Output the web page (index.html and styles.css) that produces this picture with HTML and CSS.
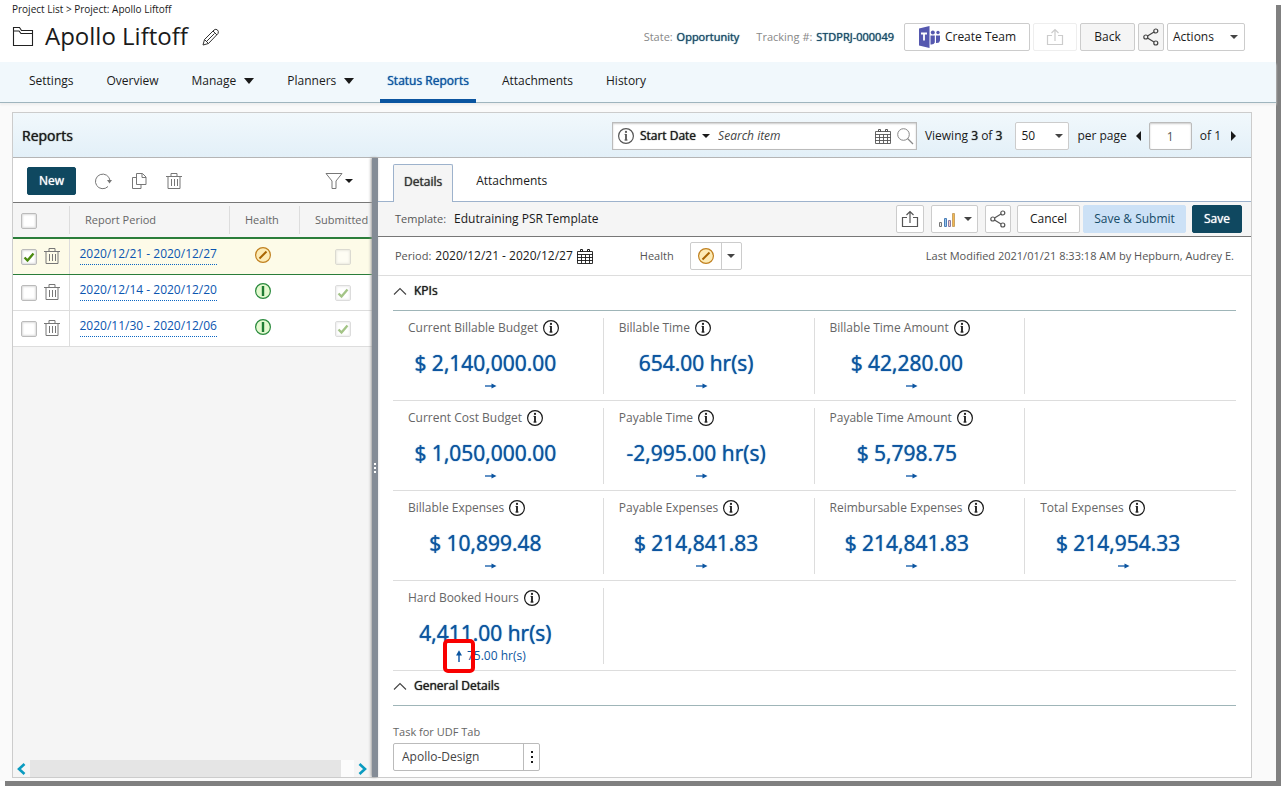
FILE: index.html
```html
<!DOCTYPE html>
<html lang="en">
<head>
<meta charset="utf-8">
<title>Apollo Liftoff - Status Reports</title>
<link rel="stylesheet" href="styles.css">
</head>
<body>
<svg class="sprite" aria-hidden="true">
  <symbol id="i-trash" viewBox="0 0 16 18"><path d="M0 4.500h16M5 4.500v-3h6v3M2 4.500v12h12v-12M5.500 7v7M8.500 7v7M11.500 7v7" fill="none" stroke="currentColor"/></symbol>
  <symbol id="i-info" viewBox="0 0 18 18"><circle cx="9" cy="9" r="7.400" fill="none" stroke="currentColor" stroke-width="1.200"/><path d="M9 7v6.500" stroke="currentColor" stroke-width="1.800"/><path d="M7.500 7.400H9M7.300 13h3.400" stroke="currentColor" stroke-width=".8"/><circle cx="9" cy="4.900" r="1.100" fill="currentColor"/></symbol>
  <symbol id="i-share" viewBox="0 0 16 18"><g fill="none" stroke="currentColor" stroke-width="1.200"><circle cx="2.800" cy="9" r="2"/><circle cx="12.800" cy="3" r="2"/><circle cx="12.800" cy="15" r="2"/><path d="M4.500 8l6.500-4M4.500 10l6.500 4"/></g></symbol>
  <symbol id="i-export" viewBox="0 0 18 18"><path d="M6 7.500H1.500v9h15v-9H12M9 13V2M5.500 5L9 1.500 12.500 5" fill="none" stroke="currentColor" stroke-width="1.200"/></symbol>
  <symbol id="i-cal" viewBox="0 0 18 17"><g fill="none" stroke="currentColor"><path d="M1.500 3.500h15v12h-15zM1 6.500h16M1 9.500h16M1 12.500h16M5.500 6.500v9M9.500 6.500v9M13.500 6.500v9" stroke-width=".9"/><path d="M4.500 1.500h2v2h-2zM11.500 1.500h2v2h-2z"/></g></symbol>
  <symbol id="i-amber" viewBox="0 0 18 18"><circle cx="9" cy="9" r="7.400" fill="#fdebb5" stroke="#c08020" stroke-width="1.200"/><path d="M5.500 12.500l7-7" stroke="#a86400" stroke-width="2"/></symbol>
  <symbol id="i-green" viewBox="0 0 18 18"><circle cx="9" cy="9" r="7.400" fill="#e3f9cf" stroke="#2a8a3e" stroke-width="1.200"/><path d="M9 4v10" stroke="#1f7d34" stroke-width="2.400"/></symbol>
  <symbol id="i-arrow" viewBox="0 0 12 6"><path d="M0 3h9" stroke="#3a76b8" stroke-width="1.600"/><path d="M6.500 .4L11.500 3l-5 2.600z" fill="#0b55a0"/></symbol>
  <symbol id="i-up" viewBox="0 0 6 12"><path d="M3 12V3" stroke="#3a76b8" stroke-width="1.800"/><path d="M0 5.500L3 .3l3 5.200z" fill="#0b55a0"/></symbol>
  <symbol id="i-chev" viewBox="0 0 14 8"><path d="M1 7.500l6-6 6 6" fill="none" stroke="#444" stroke-width="1.100"/></symbol>
</svg>
<div class="page">
  <header class="top">
    <div class="ident">
      <div class="crumbs"><a href="#">Project List</a> &gt; <span>Project: Apollo Liftoff</span></div>
      <div class="title-row">
        <svg class="folder" viewBox="0 0 22 21"><path d="M1.500 19.500V1.500h6l2 3h11v15zM1.500 5h5.500l2 2.500h11.500" fill="none" stroke="#222" stroke-width="1.100"/></svg>
        <h1>Apollo Liftoff</h1>
        <button class="bare" aria-label="Edit name"><svg class="pencil" viewBox="0 0 18 18"><path d="M1 17l1.500-5.500L12 2q2-1.500 3.500 0t.500 3.500L6.500 15.500zM2.500 11.500l4 4M11 3l4 4M5 13l7.500-7.500" fill="none" stroke="#333"/></svg></button>
      </div>
    </div>
    <div class="actions">
      <span class="meta">State: <b>Opportunity</b></span>
      <span class="meta">Tracking #: <b>STDPRJ-000049</b></span>
      <div class="btns">
        <button class="btn team"><svg class="teams" viewBox="0 0 24 24"><path d="M1 3.500L11.500 1v22L1 20.500z" fill="#5558af"/><path d="M3 8.500h6M6 8.500v7" stroke="#fff" stroke-width="1.800"/><circle cx="14.800" cy="7.500" r="2" fill="#5558af"/><circle cx="20" cy="7.500" r="1.700" fill="#5558af"/><path d="M12.500 10.500h4.300v7q-1 2.500-4.300 2zM18 10.500h4v5q-.5 3-4 2.500z" fill="#5558af"/></svg>Create Team</button>
        <button class="btn off" disabled aria-label="Export"><svg class="ic18"><use href="#i-export"/></svg></button>
        <button class="btn grey back">Back</button>
        <button class="btn grey share" aria-label="Share"><svg class="ic-share"><use href="#i-share"/></svg></button>
        <button class="btn menu">Actions <i class="caret soft"></i></button>
      </div>
    </div>
  </header>
  <nav class="nav">
    <a href="#">Settings</a>
    <a href="#">Overview</a>
    <a href="#">Manage <i class="caret big"></i></a>
    <a href="#">Planners <i class="caret big"></i></a>
    <a href="#" class="on" aria-current="page">Status Reports</a>
    <a href="#">Attachments</a>
    <a href="#">History</a>
  </nav>
  <main class="panel">
    <div class="panel-head">
      <h2>Reports</h2>
      <div class="finder">
        <div class="search">
          <svg class="ic18 dim"><use href="#i-info"/></svg>
          <button class="bare strong">Start Date <i class="caret"></i></button>
          <input type="text" placeholder="Search item" aria-label="Search item">
          <button class="bare" aria-label="Pick a date"><svg class="ic-cal dim"><use href="#i-cal"/></svg></button>
          <button class="bare" aria-label="Search"><svg class="glass" viewBox="0 0 18 18"><circle cx="7.500" cy="7.500" r="5.800" fill="none" stroke="#888"/><path d="M11.500 11.500l5.500 5.500" stroke="#888" stroke-width="1.300"/></svg></button>
        </div>
        <span class="viewing">Viewing <b>3</b> of <b>3</b></span>
        <span class="select"><select aria-label="Rows per page" id="rows"><option>50</option></select><i class="caret soft"></i></span>
        <label for="rows" class="perpage">per page</label>
        <button class="bare tri left" aria-label="Previous page"></button>
        <input class="pageno" type="text" value="1" aria-label="Page">
        <span>of 1</span>
        <button class="bare tri right" aria-label="Next page"></button>
      </div>
    </div>
    <div class="split">
      <section class="list">
        <div class="tools">
          <button class="btn solid new">New</button>
          <button class="bare" aria-label="Refresh"><svg class="ic-tool" viewBox="0 0 18 18"><path d="M14 14.500A7.300 7.300 0 1 1 16 8.500" fill="none" stroke="currentColor"/><path d="M13 8h5l-2.500 3.500z" fill="currentColor"/></svg></button>
          <button class="bare" aria-label="Copy"><svg class="ic-tool" viewBox="0 0 18 18"><path d="M6.500 1.500h6l3.500 3.500v7.500H6.500zM12 1.500V5.500h4M6.500 5.500h-4v11h8.500v-4" fill="none" stroke="currentColor"/></svg></button>
          <button class="bare" aria-label="Delete"><svg class="ic-trash"><use href="#i-trash"/></svg></button>
          <button class="bare filter" aria-label="Filter"><svg class="ic-tool" viewBox="0 0 18 18"><path d="M1 1.500h16l-6 7.500v7.500H7V9z" fill="none" stroke="currentColor"/></svg><i class="caret"></i></button>
        </div>
        <table>
          <thead><tr>
            <th class="c1"><input type="checkbox" aria-label="Select all"></th>
            <th class="c2"><span>Report Period</span></th>
            <th class="c3"><span>Health</span></th>
            <th class="c4"><span>Submitted</span></th>
          </tr></thead>
          <tbody>
            <tr class="sel">
              <td><div class="pick"><input type="checkbox" checked aria-label="Select report"><button class="bare" aria-label="Delete report"><svg class="ic-trash"><use href="#i-trash"/></svg></button></div></td>
              <td class="per"><a href="#">2020/12/21 - 2020/12/27</a></td>
              <td class="mid"><svg class="ic18"><use href="#i-amber"/></svg></td>
              <td class="sub"><input type="checkbox" disabled aria-label="Submitted"></td>
            </tr>
            <tr>
              <td><div class="pick"><input type="checkbox" aria-label="Select report"><button class="bare" aria-label="Delete report"><svg class="ic-trash"><use href="#i-trash"/></svg></button></div></td>
              <td class="per"><a href="#">2020/12/14 - 2020/12/20</a></td>
              <td class="mid"><svg class="ic18"><use href="#i-green"/></svg></td>
              <td class="sub"><input type="checkbox" checked disabled aria-label="Submitted"></td>
            </tr>
            <tr>
              <td><div class="pick"><input type="checkbox" aria-label="Select report"><button class="bare" aria-label="Delete report"><svg class="ic-trash"><use href="#i-trash"/></svg></button></div></td>
              <td class="per"><a href="#">2020/11/30 - 2020/12/06</a></td>
              <td class="mid"><svg class="ic18"><use href="#i-green"/></svg></td>
              <td class="sub"><input type="checkbox" checked disabled aria-label="Submitted"></td>
            </tr>
          </tbody>
        </table>
        <div class="hscroll">
          <button class="bare" aria-label="Scroll left"><svg viewBox="0 0 10 12"><path d="M8.500 1L3 6l5.500 5" fill="none" stroke="#0a9bc0" stroke-width="2.600"/></svg></button>
          <span class="track"><span class="thumb"></span></span>
          <button class="bare" aria-label="Scroll right"><svg viewBox="0 0 10 12"><path d="M1.500 1L7 6l-5.500 5" fill="none" stroke="#0a9bc0" stroke-width="2.600"/></svg></button>
        </div>
      </section>
      <div class="splitter"><i></i><i></i><i></i></div>
      <section class="details">
        <div class="tabs"><button class="tab on">Details</button><button class="tab">Attachments</button></div>
        <div class="bar">
          <span class="dim">Template:</span><span class="tpl">Edutraining PSR Template</span>
          <div class="barbtns">
            <button class="btn sq" aria-label="Export"><svg class="ic18"><use href="#i-export"/></svg></button>
            <button class="btn chart" aria-label="Charts"><svg class="ic18" viewBox="0 0 18 18"><path d="M1.500 16.500v-4h2v4z" fill="#eee" stroke="#777"/><path d="M6.500 16.500v-8h2v8z" fill="#9cc3ea" stroke="#4a7fb8"/><path d="M10.500 16.500v-6h2v6z" fill="#f0cdc4" stroke="#8c7aa5"/><path d="M14.500 16.500v-13h2v13z" fill="#f4b850" stroke="#c9a468"/></svg><i class="caret soft"></i></button>
            <button class="btn share" aria-label="Share"><svg class="ic-share"><use href="#i-share"/></svg></button>
            <button class="btn cancel">Cancel</button>
            <button class="btn pale">Save &amp; Submit</button>
            <button class="btn solid save">Save</button>
          </div>
        </div>
        <div class="period">
          <span class="dim">Period:</span><span class="dates">2020/12/21 - 2020/12/27</span>
          <button class="bare" aria-label="Change period"><svg class="ic-cal"><use href="#i-cal"/></svg></button>
          <span class="dim hl">Health</span>
          <button class="btn health" aria-label="Set health"><span><svg class="ic18"><use href="#i-amber"/></svg></span><span><i class="caret soft"></i></span></button>
          <span class="modified">Last Modified 2021/01/21 8:33:18 AM by Hepburn, Audrey E.</span>
        </div>
        <div class="body">
          <h3><svg class="chev"><use href="#i-chev"/></svg>KPIs</h3>
          <div class="kpis">
            <div class="kpi"><div class="name">Current Billable Budget<svg class="ic18"><use href="#i-info"/></svg></div><div class="val">$ 2,140,000.00</div><div class="trend"><svg class="ar"><use href="#i-arrow"/></svg></div></div>
            <div class="kpi"><div class="name">Billable Time<svg class="ic18"><use href="#i-info"/></svg></div><div class="val">654.00 hr(s)</div><div class="trend"><svg class="ar"><use href="#i-arrow"/></svg></div></div>
            <div class="kpi"><div class="name">Billable Time Amount<svg class="ic18"><use href="#i-info"/></svg></div><div class="val">$ 42,280.00</div><div class="trend"><svg class="ar"><use href="#i-arrow"/></svg></div></div>
          </div>
          <div class="kpis">
            <div class="kpi"><div class="name">Current Cost Budget<svg class="ic18"><use href="#i-info"/></svg></div><div class="val">$ 1,050,000.00</div><div class="trend"><svg class="ar"><use href="#i-arrow"/></svg></div></div>
            <div class="kpi"><div class="name">Payable Time<svg class="ic18"><use href="#i-info"/></svg></div><div class="val">-2,995.00 hr(s)</div><div class="trend"><svg class="ar"><use href="#i-arrow"/></svg></div></div>
            <div class="kpi"><div class="name">Payable Time Amount<svg class="ic18"><use href="#i-info"/></svg></div><div class="val">$ 5,798.75</div><div class="trend"><svg class="ar"><use href="#i-arrow"/></svg></div></div>
          </div>
          <div class="kpis">
            <div class="kpi"><div class="name">Billable Expenses<svg class="ic18"><use href="#i-info"/></svg></div><div class="val">$ 10,899.48</div><div class="trend"><svg class="ar"><use href="#i-arrow"/></svg></div></div>
            <div class="kpi"><div class="name">Payable Expenses<svg class="ic18"><use href="#i-info"/></svg></div><div class="val">$ 214,841.83</div><div class="trend"><svg class="ar"><use href="#i-arrow"/></svg></div></div>
            <div class="kpi"><div class="name">Reimbursable Expenses<svg class="ic18"><use href="#i-info"/></svg></div><div class="val">$ 214,841.83</div><div class="trend"><svg class="ar"><use href="#i-arrow"/></svg></div></div>
            <div class="kpi"><div class="name">Total Expenses<svg class="ic18"><use href="#i-info"/></svg></div><div class="val">$ 214,954.33</div><div class="trend"><svg class="ar"><use href="#i-arrow"/></svg></div></div>
          </div>
          <div class="kpis">
            <div class="kpi"><div class="name">Hard Booked Hours<svg class="ic18"><use href="#i-info"/></svg></div><div class="val">4,411.00 hr(s)</div><div class="trend"><span class="marked"><svg class="up"><use href="#i-up"/></svg></span>75.00 hr(s)</div></div>
          </div>
          <h3><svg class="chev"><use href="#i-chev"/></svg>General Details</h3>
          <label class="udf" for="udf">Task for UDF Tab</label>
          <div class="lookup"><input id="udf" type="text" value="Apollo-Design"><button aria-label="Look up task"><i></i><i></i><i></i></button></div>
        </div>
      </section>
    </div>
  </main>
</div>
</body>
</html>
```
FILE: styles.css
```css
* { box-sizing: border-box; }
body {
  margin: 0;
  background: #fff;
  font: 12px/16px "Open Sans", "Noto Sans", sans-serif;
  color: #1a1a1a;
}
button, input, select { font: inherit; color: inherit; }
h1, h2, h3 { margin: 0; font-weight: 400; }
b, h2, h3, .strong, .nav .on, .tab.on, .val, .solid {
  font-weight: 400;
  text-shadow: 0 0 1px currentColor;
}
svg { display: block; flex: none; }
.sprite { position: absolute; width: 0; height: 0; }

.page {
  display: flex;
  flex-direction: column;
  min-height: calc(100vh - 5px);
  margin: 0 5px 5px 0;
  background: #fafafa;
  box-shadow: 5px 5px 0 #808080;
}

/* shared controls */
.bare {
  display: inline-flex;
  align-items: center;
  padding: 0;
  border: 0;
  background: none;
}
.btn {
  display: inline-flex;
  align-items: center;
  justify-content: center;
  height: 28px;
  padding: 0;
  border: 1px solid #ccc;
  border-radius: 2px;
  background: #fff;
}
.btn.grey { background: #f5f5f5; }
.btn.off { width: 44px; border-color: #eee; color: #ccc; }
.btn.solid { border-color: #0f4860; background: #0f4860; color: #fff; }
.btn.pale { border-color: #cce1f6; background: #cce1f6; color: #164b68; }
.caret {
  width: 0;
  height: 0;
  border: 4px solid transparent;
  border-top: 4px solid #1a1a1a;
  border-bottom: 0;
}
.caret.soft { border-top-color: #444; }
.caret.big { border-width: 6px 5px 0; }
.ic18 { width: 18px; height: 18px; }
.ic-share { width: 16px; height: 18px; color: #444; }
.ic-cal { width: 18px; height: 17px; }
.ic-tool { width: 18px; height: 18px; color: #777; }
.ic-trash { width: 16px; height: 18px; color: #777; }
.dim { color: #555; }

/* top */
.top {
  display: flex;
  justify-content: space-between;
  height: 62px;
  padding: 2px 31px 0 12px;
  background: #fff;
}
.crumbs { font-size: 10px; line-height: 14px; }
.crumbs a { color: inherit; text-decoration: none; }
.title-row { display: flex; align-items: center; height: 40px; }
.title-row h1 { margin: 0 14px 0 11px; font-size: 24px; line-height: 32px; }
.folder { width: 22px; height: 21px; }
.pencil { width: 18px; height: 18px; margin-top: 2px; }
.actions { display: flex; align-items: center; height: 70px; }
.meta { margin-right: 17px; font-size: 11px; color: #888; }
.meta + .meta { margin-right: 10px; }
.meta b { margin-left: 1px; color: #164b68; }
.btns { display: flex; gap: 3px; }
.team { width: 126px; gap: 3px; }
.teams { width: 24px; height: 24px; }
.back { width: 55px; }
.btn.share { width: 26px; }
.menu { width: 78px; justify-content: space-between; padding: 0 6px 0 5px; }

.nav {
  display: flex;
  gap: 19px;
  height: 41px;
  padding-left: 22px;
  border-bottom: 1px solid #9fb5be;
  background: #f1f8fc;
  box-shadow: 0 2px 2px #eee;
}
.nav a {
  display: flex;
  align-items: center;
  gap: 8px;
  height: 41px;
  padding: 0 7px;
  border-bottom: 4px solid transparent;
  color: inherit;
  text-decoration: none;
}
.nav .on { border-bottom-color: #0b55a0; color: #0b55a0; }

/* panel */
.panel {
  display: flex;
  flex: 1;
  flex-direction: column;
  margin: 9px 24px 3px 12px;
  border: 1px solid #ccc;
  background: #fff;
}
.panel-head {
  display: flex;
  align-items: center;
  justify-content: space-between;
  height: 45px;
  padding: 2px 15px 0 9px;
  border-bottom: 1px solid #b5b5b5;
  background: linear-gradient(#f1f8fc, #e3f0f8);
}
.panel-head h2 { font-size: 14px; }
.finder { display: flex; align-items: center; }
.search {
  display: flex;
  align-items: center;
  width: 305px;
  height: 28px;
  padding: 0 2px 0 4px;
  border: 1px solid #bbb;
  background: #fff;
  box-shadow: inset 0 1px 2px #ccc;
}
.search .strong { gap: 6px; margin: 0 8px 0 5px; }
.search input { flex: 1; min-width: 0; padding: 0; border: 0; background: none; font-style: italic; }
.search input::placeholder { color: #444; }
.glass { width: 18px; height: 18px; margin-left: 4px; }
.viewing { margin: 0 13px 0 8px; }
.select { display: flex; align-items: center; position: relative; }
.select select {
  width: 54px;
  height: 28px;
  padding: 0 5px;
  border: 1px solid #ccc;
  border-radius: 2px;
  background: #fff;
  appearance: none;
}
.select .caret { position: absolute; right: 6px; pointer-events: none; }
.perpage { margin: 0 9px 0 8px; }
.tri { width: 0; height: 0; border: 5px solid transparent; }
.tri.left { border-left: 0; border-right-color: #1a1a1a; }
.tri.right { margin-left: 10px; border-right: 0; border-left-color: #1a1a1a; }
.pageno {
  width: 43px;
  height: 28px;
  margin: 0 8px;
  padding: 0;
  border: 1px solid #bbb;
  border-radius: 2px;
  box-shadow: inset 0 1px 2px #ccc;
  color: #555;
  text-align: center;
}
.split { display: flex; flex: 1; }

/* report list */
.list { display: flex; flex-direction: column; width: 359px; background: #f5f5f5; overflow: hidden; }
.tools {
  display: flex;
  align-items: center;
  gap: 18px;
  height: 45px;
  padding: 2px 19px 0 14px;
  border-bottom: 1px solid #777;
  background: #fff;
}
.new { width: 49px; }
.filter { gap: 2px; margin-left: auto; }
table { width: 100%; border-collapse: collapse; table-layout: fixed; }
th { height: 34px; padding: 3px 0; background: #f5f5f5; color: #666; font-size: 11px; font-weight: 400; text-align: left; }
th span { display: block; padding-left: 15px; border-left: 1px solid #ddd; line-height: 28px; white-space: nowrap; }
.c1 { width: 56px; padding-left: 8px; }
.c2 { width: 160px; }
.c3 { width: 70px; }
td { height: 36px; padding: 0; border-bottom: 1px solid #ddd; background: #fff; }
td:first-child { border-right: 1px solid #ddd; }
.sel td { border-top: 2px solid #2a7d3a; border-bottom: 1px solid #2a7d3a; background: #fdfbe8; }
.pick { display: flex; align-items: center; gap: 7px; padding-left: 8px; }
.per, .mid { padding-bottom: 2px; }
.per { padding-left: 10px; }
.per a { display: inline-block; height: 18px; border-bottom: 1px dotted #0b66c3; color: #0b55b0; line-height: 14px; text-decoration: none; }
.mid .ic18 { margin-left: 25px; }
.sub { padding-left: 36px; }
input[type="checkbox"] {
  display: block;
  width: 16px;
  height: 16px;
  margin: 2px 0 0;
  border: 1px solid #bbb;
  border-radius: 2px;
  background: #fff center / 14px no-repeat;
  box-shadow: inset 0 0 2px 1px #ddd;
  appearance: none;
}
input[type="checkbox"]:checked { background-image: url("data:image/svg+xml,%3Csvg xmlns='http://www.w3.org/2000/svg' viewBox='0 0 14 14'%3E%3Cpath d='M2.500 7.500l3 3 6-7' fill='none' stroke='%234a8a10' stroke-width='2.400'/%3E%3C/svg%3E"); }
input[type="checkbox"]:disabled { opacity: .5; }
.hscroll { display: flex; align-items: center; height: 17px; margin-top: auto; padding: 0 4px 0 3px; }
.hscroll svg { width: 10px; height: 12px; }
.hscroll .track { flex: 1; height: 17px; margin: 0 4px; background: #fcfcfc; }
.hscroll .thumb { display: block; width: 96%; height: 17px; background: #e5e5e5; }

.splitter {
  display: flex;
  flex-direction: column;
  align-items: center;
  justify-content: center;
  gap: 2px;
  width: 6px;
  background: #848c96;
  box-shadow: -1px 0 3px #999;
}
.splitter i { width: 2px; height: 2px; background: #fff; }

/* details */
.details { display: flex; flex: 1; flex-direction: column; min-width: 0; }
.tabs { display: flex; align-items: flex-end; height: 44px; padding-left: 15px; border-bottom: 1px solid #9db2cc; }
.tab { height: 38px; margin-bottom: -1px; padding: 0 10px 5px; border: 1px solid transparent; background: none; }
.tab.on { margin-right: 12px; padding: 0 10px 3px; border-color: #9db2cc; border-bottom: 0; border-radius: 2px 2px 0 0; background: #f5f5f5; color: #333; }
.bar { display: flex; align-items: center; height: 35px; padding: 0 9px 0 17px; border-bottom: 1px solid #777; background: #f5f5f5; }
.tpl { margin-left: 8px; }
.bar > .dim, .period .dim { font-size: 11px; }
.barbtns { display: flex; align-items: center; margin-left: auto; }
.barbtns svg { color: #555; }
.sq { width: 28px; margin-right: 7px; }
.chart { width: 47px; gap: 8px; margin-right: 7px; }
.barbtns .share { margin-right: 6px; }
.cancel { width: 63px; margin-right: 3px; }
.pale { width: 103px; margin-right: 6px; }
.save { width: 50px; }
.period { display: flex; align-items: center; height: 39px; padding: 0 17px; border-bottom: 1px solid #ddd; }
.dates { margin: 0 3px 0 4px; }
.hl { margin: 0 16px 0 46px; }
.health span { display: flex; align-items: center; justify-content: center; width: 30px; height: 26px; }
.health span + span { width: 20px; border-left: 1px solid #ccc; }
.modified { margin-left: auto; font-size: 11px; color: #555; }
.body { padding: 0 15px 6px; }
h3 { display: flex; align-items: center; gap: 7px; height: 35px; padding-bottom: 4px; border-bottom: 1px solid #9fb5b8; font-size: 12px; }
.chev { width: 14px; height: 8px; }
.kpis { display: grid; grid-template-columns: repeat(4, 1fr); height: 90px; padding: 7px 0; border-bottom: 1px solid #ddd; }
.kpi { border-right: 1px solid #ddd; }
.kpi:nth-child(4) { border-right: 0; }
.name { display: flex; align-items: center; gap: 4px; height: 20px; padding-left: 15px; color: #666; white-space: nowrap; }
.name svg { color: #1a1a1a; }
.val { margin-top: 10px; padding-right: 25px; color: #0b55a0; font-size: 21px; line-height: 30px; text-align: center; }
.trend { display: flex; align-items: center; justify-content: center; gap: 5px; height: 16px; padding-right: 14px; color: #0b55a0; }
.ar { width: 12px; height: 6px; }
.up { width: 6px; height: 12px; }
.marked { position: relative; }
.marked::after {
  content: "";
  position: absolute;
  inset: -11px -13px;
  border: 4px solid #f90000;
  border-radius: 5px;
}
.udf { display: block; margin: 18px 0 3px; color: #666; font-size: 11px; }
.lookup { display: flex; width: 147px; height: 28px; border: 1px solid #bbb; border-radius: 2px; }
.lookup input { flex: 1; min-width: 0; padding: 0 8px; border: 0; background: none; color: #444; }
.lookup button { display: flex; flex-direction: column; align-items: center; justify-content: center; gap: 3px; width: 16px; padding: 0; border: 0; border-left: 1px solid #bbb; background: none; }
.lookup i { width: 2px; height: 2px; background: #1a1a1a; }
```
